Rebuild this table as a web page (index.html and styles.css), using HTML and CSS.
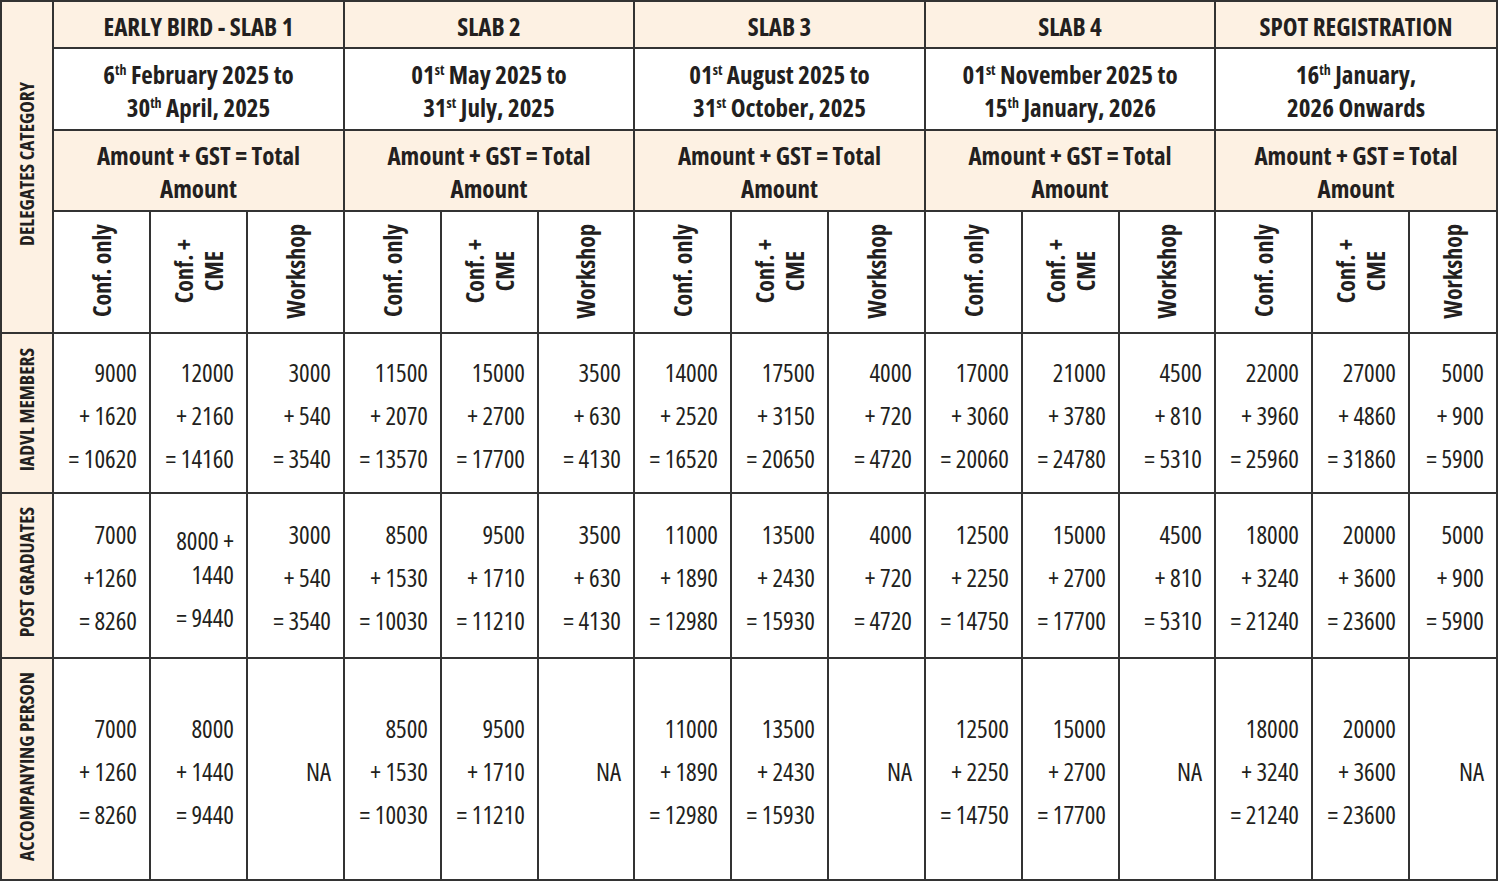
FILE: index.html
```html
<!DOCTYPE html>
<html lang="en">
<head>
<meta charset="utf-8">
<title>Registration Fees</title>
<link rel="stylesheet" href="styles.css">
</head>
<body>
<table class="fees">
  <colgroup>
    <col class="c-cat">
    <col class="c-97"><col class="c-97"><col class="c-97">
    <col class="c-97"><col class="c-97"><col class="c-96">
    <col class="c-97"><col class="c-97"><col class="c-97">
    <col class="c-97"><col class="c-97"><col class="c-96">
    <col class="c-97"><col class="c-97"><col class="c-88">
  </colgroup>
  <thead>
    <tr class="r-slab">
      <th class="cat beige" rowspan="4"><span class="vtext">DELEGATES CATEGORY</span></th>
      <th class="slab beige" colspan="3">EARLY BIRD - SLAB 1</th>
      <th class="slab beige" colspan="3">SLAB 2</th>
      <th class="slab beige" colspan="3">SLAB 3</th>
      <th class="slab beige" colspan="3">SLAB 4</th>
      <th class="slab beige" colspan="3">SPOT REGISTRATION</th>
    </tr>
    <tr class="r-date">
      <th class="date" colspan="3">6<sup>th</sup> February 2025 to<br>30<sup>th</sup> April, 2025</th>
      <th class="date" colspan="3">01<sup>st</sup> May 2025 to<br>31<sup>st</sup> July, 2025</th>
      <th class="date" colspan="3">01<sup>st</sup> August 2025 to<br>31<sup>st</sup> October, 2025</th>
      <th class="date" colspan="3">01<sup>st</sup> November 2025 to<br>15<sup>th</sup> January, 2026</th>
      <th class="date" colspan="3">16<sup>th</sup> January,<br>2026 Onwards</th>
    </tr>
    <tr class="r-amt">
      <th class="amt beige" colspan="3">Amount + GST = Total<br>Amount</th>
      <th class="amt beige" colspan="3">Amount + GST = Total<br>Amount</th>
      <th class="amt beige" colspan="3">Amount + GST = Total<br>Amount</th>
      <th class="amt beige" colspan="3">Amount + GST = Total<br>Amount</th>
      <th class="amt beige" colspan="3">Amount + GST = Total<br>Amount</th>
    </tr>
    <tr class="r-type">
      <th class="type"><span class="vtext">Conf. only</span></th>
      <th class="type"><span class="vtext">Conf. +<br>CME</span></th>
      <th class="type"><span class="vtext">Workshop</span></th>
      <th class="type"><span class="vtext">Conf. only</span></th>
      <th class="type"><span class="vtext">Conf. +<br>CME</span></th>
      <th class="type"><span class="vtext">Workshop</span></th>
      <th class="type"><span class="vtext">Conf. only</span></th>
      <th class="type"><span class="vtext">Conf. +<br>CME</span></th>
      <th class="type"><span class="vtext">Workshop</span></th>
      <th class="type"><span class="vtext">Conf. only</span></th>
      <th class="type"><span class="vtext">Conf. +<br>CME</span></th>
      <th class="type"><span class="vtext">Workshop</span></th>
      <th class="type"><span class="vtext">Conf. only</span></th>
      <th class="type"><span class="vtext">Conf. +<br>CME</span></th>
      <th class="type"><span class="vtext">Workshop</span></th>
    </tr>
  </thead>
  <tbody>
    <tr class="r-iadvl">
      <th class="cat beige"><span class="vtext">IADVL MEMBERS</span></th>
      <td class="num">9000<br>+ 1620<br>= 10620</td>
      <td class="num">12000<br>+ 2160<br>= 14160</td>
      <td class="num">3000<br>+ 540<br>= 3540</td>
      <td class="num">11500<br>+ 2070<br>= 13570</td>
      <td class="num">15000<br>+ 2700<br>= 17700</td>
      <td class="num">3500<br>+ 630<br>= 4130</td>
      <td class="num">14000<br>+ 2520<br>= 16520</td>
      <td class="num">17500<br>+ 3150<br>= 20650</td>
      <td class="num">4000<br>+ 720<br>= 4720</td>
      <td class="num">17000<br>+ 3060<br>= 20060</td>
      <td class="num">21000<br>+ 3780<br>= 24780</td>
      <td class="num">4500<br>+ 810<br>= 5310</td>
      <td class="num">22000<br>+ 3960<br>= 25960</td>
      <td class="num">27000<br>+ 4860<br>= 31860</td>
      <td class="num">5000<br>+ 900<br>= 5900</td>
    </tr>
    <tr class="r-pg">
      <th class="cat beige"><span class="vtext">POST GRADUATES</span></th>
      <td class="num">7000<br>+1260<br>= 8260</td>
      <td class="num num-split"><span class="tight">8000 +<br>1440</span><span class="tail">= 9440</span></td>
      <td class="num">3000<br>+ 540<br>= 3540</td>
      <td class="num">8500<br>+ 1530<br>= 10030</td>
      <td class="num">9500<br>+ 1710<br>= 11210</td>
      <td class="num">3500<br>+ 630<br>= 4130</td>
      <td class="num">11000<br>+ 1890<br>= 12980</td>
      <td class="num">13500<br>+ 2430<br>= 15930</td>
      <td class="num">4000<br>+ 720<br>= 4720</td>
      <td class="num">12500<br>+ 2250<br>= 14750</td>
      <td class="num">15000<br>+ 2700<br>= 17700</td>
      <td class="num">4500<br>+ 810<br>= 5310</td>
      <td class="num">18000<br>+ 3240<br>= 21240</td>
      <td class="num">20000<br>+ 3600<br>= 23600</td>
      <td class="num">5000<br>+ 900<br>= 5900</td>
    </tr>
    <tr class="r-acc">
      <th class="cat beige"><span class="vtext">ACCOMPANYING PERSON</span></th>
      <td class="num">7000<br>+ 1260<br>= 8260</td>
      <td class="num">8000<br>+ 1440<br>= 9440</td>
      <td class="num">NA</td>
      <td class="num">8500<br>+ 1530<br>= 10030</td>
      <td class="num">9500<br>+ 1710<br>= 11210</td>
      <td class="num">NA</td>
      <td class="num">11000<br>+ 1890<br>= 12980</td>
      <td class="num">13500<br>+ 2430<br>= 15930</td>
      <td class="num">NA</td>
      <td class="num">12500<br>+ 2250<br>= 14750</td>
      <td class="num">15000<br>+ 2700<br>= 17700</td>
      <td class="num">NA</td>
      <td class="num">18000<br>+ 3240<br>= 21240</td>
      <td class="num">20000<br>+ 3600<br>= 23600</td>
      <td class="num">NA</td>
    </tr>
  </tbody>
</table>
</body>
</html>
```

FILE: styles.css
```css
html, body {
  margin: 0;
  padding: 0;
  background: #ffffff;
}

body {
  font-family: "Open Sans", "Roboto Condensed", "Liberation Sans", sans-serif;
  font-stretch: 75%;
  color: #231f20;
}

.fees {
  border-collapse: collapse;
  table-layout: fixed;
  border: 2px solid #333333;
}

.fees th,
.fees td {
  border: 2px solid #333333;
  padding: 0;
  overflow: hidden;
}

.c-cat { width: 52px; }
.c-97 { width: 97px; }
.c-96 { width: 96px; }
.c-88 { width: 88px; }

.fees .beige {
  background: #fdf1e3;
}

.r-slab { height: 47px; }
.r-date { height: 82px; }
.r-amt { height: 81px; }
.r-type { height: 122px; }
.r-iadvl { height: 160px; }
.r-pg { height: 165px; }
.r-acc { height: 222px; }

.fees .slab {
  font-size: 25px;
  font-weight: bold;
  line-height: 30px;
  text-align: center;
  vertical-align: middle;
  padding-top: 2px;
}

.fees .date,
.fees .amt {
  font-size: 25px;
  font-weight: bold;
  line-height: 33px;
  text-align: center;
  vertical-align: middle;
  padding-top: 3px;
}

.fees .date {
  background: #ffffff;
}

.date sup {
  font-size: 14px;
  line-height: 0;
  vertical-align: 9px;
}

.vtext {
  display: inline-block;
  writing-mode: vertical-rl;
  transform: rotate(180deg);
  text-align: center;
}

.fees .cat {
  font-size: 19.5px;
  font-weight: bold;
  line-height: 26px;
  text-align: center;
  vertical-align: middle;
}

.fees .type {
  font-size: 24px;
  font-weight: bold;
  text-align: center;
  vertical-align: middle;
  line-height: 30px;
  padding-top: 4px;
  background: #ffffff;
}

.fees .num {
  font-size: 25px;
  font-weight: normal;
  line-height: 43px;
  text-align: right;
  vertical-align: middle;
  padding-top: 4px;
  padding-right: 12px;
}

.fees .num-split {
  padding-top: 15px;
}

.tight {
  display: block;
  line-height: 34px;
}

.tail {
  display: block;
  line-height: 52px;
}
```
